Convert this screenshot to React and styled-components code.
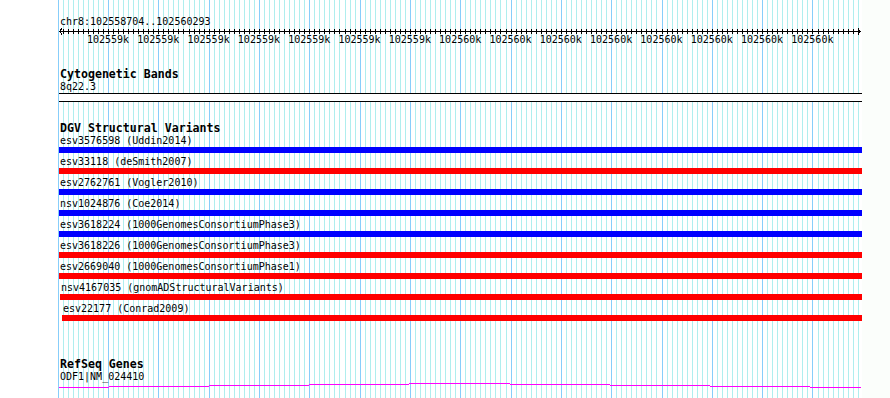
import React from "react";
import styled, { createGlobalStyle } from "styled-components";

const LEFT = 59;
const WIDTH = 803;
const MAJOR = 108;
const STEP = 5.032;

// grid line positions, relative to the track area left edge
const gridLines = [];
for (let j = -10; j <= 149; j++) {
  gridLines.push({ x: Math.round(MAJOR + STEP * j) - LEFT, major: j % 10 === 0 });
}

const tickLabels = [
  ...Array(7).fill("102559k"),
  ...Array(8).fill("102560k"),
];

const variants = [
  { name: "esv3576598 (Uddin2014)", color: "#0000ff", offset: 1 },
  { name: "esv33118 (deSmith2007)", color: "#ff0000", offset: 1 },
  { name: "esv2762761 (Vogler2010)", color: "#0000ff", offset: 1 },
  { name: "nsv1024876 (Coe2014)", color: "#0000ff", offset: 1 },
  { name: "esv3618224 (1000GenomesConsortiumPhase3)", color: "#0000ff", offset: 1 },
  { name: "esv3618226 (1000GenomesConsortiumPhase3)", color: "#ff0000", offset: 1 },
  { name: "esv2669040 (1000GenomesConsortiumPhase1)", color: "#ff0000", offset: 1 },
  { name: "nsv4167035 (gnomADStructuralVariants)", color: "#ff0000", offset: 2 },
  { name: "esv22177 (Conrad2009)", color: "#ff0000", offset: 4 },
];

// stepped intron line of the gene: [x1, x2, y]
const geneSegments = [
  [0, 50, 5],
  [50, 150, 4],
  [150, 250, 3],
  [250, 350, 2],
  [350, 451, 1],
  [451, 551, 2],
  [551, 651, 3],
  [651, 751, 4],
  [751, 802, 5],
];

const Global = createGlobalStyle`
  html, body {
    margin: 0;
    padding: 0;
    background: #ffffff;
  }
  body {
    font-family: "DejaVu Sans Mono", "Liberation Mono", monospace;
    font-size: 10px;
    color: #000;
  }
`;

const App = () => {
  return (
    <>
      <Global />
      <S.Page>
        <S.Gutter />
        <S.Tracks>
          <S.Grid width={WIDTH + 1} height="398">
            {gridLines.map((g, i) => (
              <rect
                key={i}
                x={g.x + 1}
                y="0"
                width="1"
                height="398"
                fill={g.major ? "#87cefa" : "#afeeee"}
              />
            ))}
          </S.Grid>

          <S.Ruler>
            <S.Loc>chr8:102558704..102560293</S.Loc>
            <S.Axis width={WIDTH} height="7">
              <rect x="0" y="3" width={WIDTH - 1} height="1" fill="#000" />
              {gridLines
                .filter((g) => g.x > 2 && g.x < WIDTH - 3)
                .map((g, i) => (
                  <rect key={i} x={g.x} y="1" width="1" height="5" fill="#000" />
                ))}
              <path d="M3 0.5 L0.5 3.5 L3 6.5" stroke="#000" fill="none" />
              <path d="M799 0.5 L801.5 3.5 L799 6.5" stroke="#000" fill="none" />
            </S.Axis>
            <S.TickRow>
              {tickLabels.map((t, i) => (
                <S.Tick key={i}>{t}</S.Tick>
              ))}
            </S.TickRow>
          </S.Ruler>

          <S.Track $top={22}>
            <S.Header>Cytogenetic Bands</S.Header>
            <S.Sub $gap={2}>8q22.3</S.Sub>
            <S.Band />
          </S.Track>

          <S.Track $top={20}>
            <S.Header>DGV Structural Variants</S.Header>
            {variants.map((v) => (
              <S.Feature key={v.name} $offset={v.offset}>
                <S.FeatureLabel>{v.name}</S.FeatureLabel>
                <S.Bar $color={v.color} />
              </S.Feature>
            ))}
          </S.Track>

          <S.Track $top={35}>
            <S.Header>RefSeq Genes</S.Header>
            <S.Sub $gap={2}>ODF1|NM_024410</S.Sub>
            <S.Gene width={WIDTH} height="7">
              {geneSegments.map(([x1, x2, y], i) => (
                <rect key={i} x={x1} y={y} width={x2 - x1} height="1" fill="#ff00ff" />
              ))}
            </S.Gene>
          </S.Track>
        </S.Tracks>
        <S.Filler />
      </S.Page>
    </>
  );
};

const S = {
  Page: styled.div`
    display: flex;
    flex-direction: row;
    width: 890px;
    height: 398px;
    overflow: hidden;
  `,
  Gutter: styled.div`
    width: ${LEFT}px;
    flex: none;
    background: #ffffff;
  `,
  Tracks: styled.div`
    position: relative;
    width: ${WIDTH}px;
    flex: none;
    display: flex;
    flex-direction: column;
  `,
  Grid: styled.svg`
    position: absolute;
    left: -1px;
    top: 0;
    z-index: 0;
    shape-rendering: crispEdges;
  `,
  Filler: styled.div`
    flex: 1;
    background: #fbfefb;
  `,
  Ruler: styled.div`
    position: relative;
    z-index: 1;
    padding-top: 16px;
    display: flex;
    flex-direction: column;
  `,
  Loc: styled.div`
    line-height: 12px;
    padding-left: 1px;
  `,
  Axis: styled.svg`
    display: block;
    shape-rendering: crispEdges;
  `,
  TickRow: styled.div`
    display: flex;
    flex-direction: row;
    padding-left: ${MAJOR - LEFT - STEP * 5}px;
    margin-top: -1px;
    line-height: 12px;
  `,
  Tick: styled.div`
    width: ${STEP * 10}px;
    flex: none;
    text-align: center;
  `,
  Track: styled.div`
    position: relative;
    z-index: 1;
    margin-top: ${({ $top }) => $top}px;
    display: flex;
    flex-direction: column;
  `,
  Header: styled.div`
    font-weight: bold;
    font-size: 11.6px;
    line-height: 12px;
    padding-left: 1px;
  `,
  Sub: styled.div`
    line-height: 10px;
    margin-top: ${({ $gap }) => $gap || 0}px;
    padding-left: 1px;
  `,
  Band: styled.div`
    margin-top: 1px;
    height: 7px;
    background: #ffffff;
    border-top: 1px solid #000;
    border-bottom: 1px solid #000;
  `,
  Feature: styled.div`
    display: flex;
    flex-direction: column;
    padding-left: ${({ $offset }) => $offset - 1}px;
    margin-bottom: 2px;
  `,
  FeatureLabel: styled.div`
    line-height: 13px;
    padding-left: 1px;
    white-space: nowrap;
  `,
  Bar: styled.div`
    height: 6px;
    background: ${({ $color }) => $color};
  `,
  Gene: styled.svg`
    display: block;
    margin-top: 0;
    shape-rendering: crispEdges;
  `,
};

export default App;
